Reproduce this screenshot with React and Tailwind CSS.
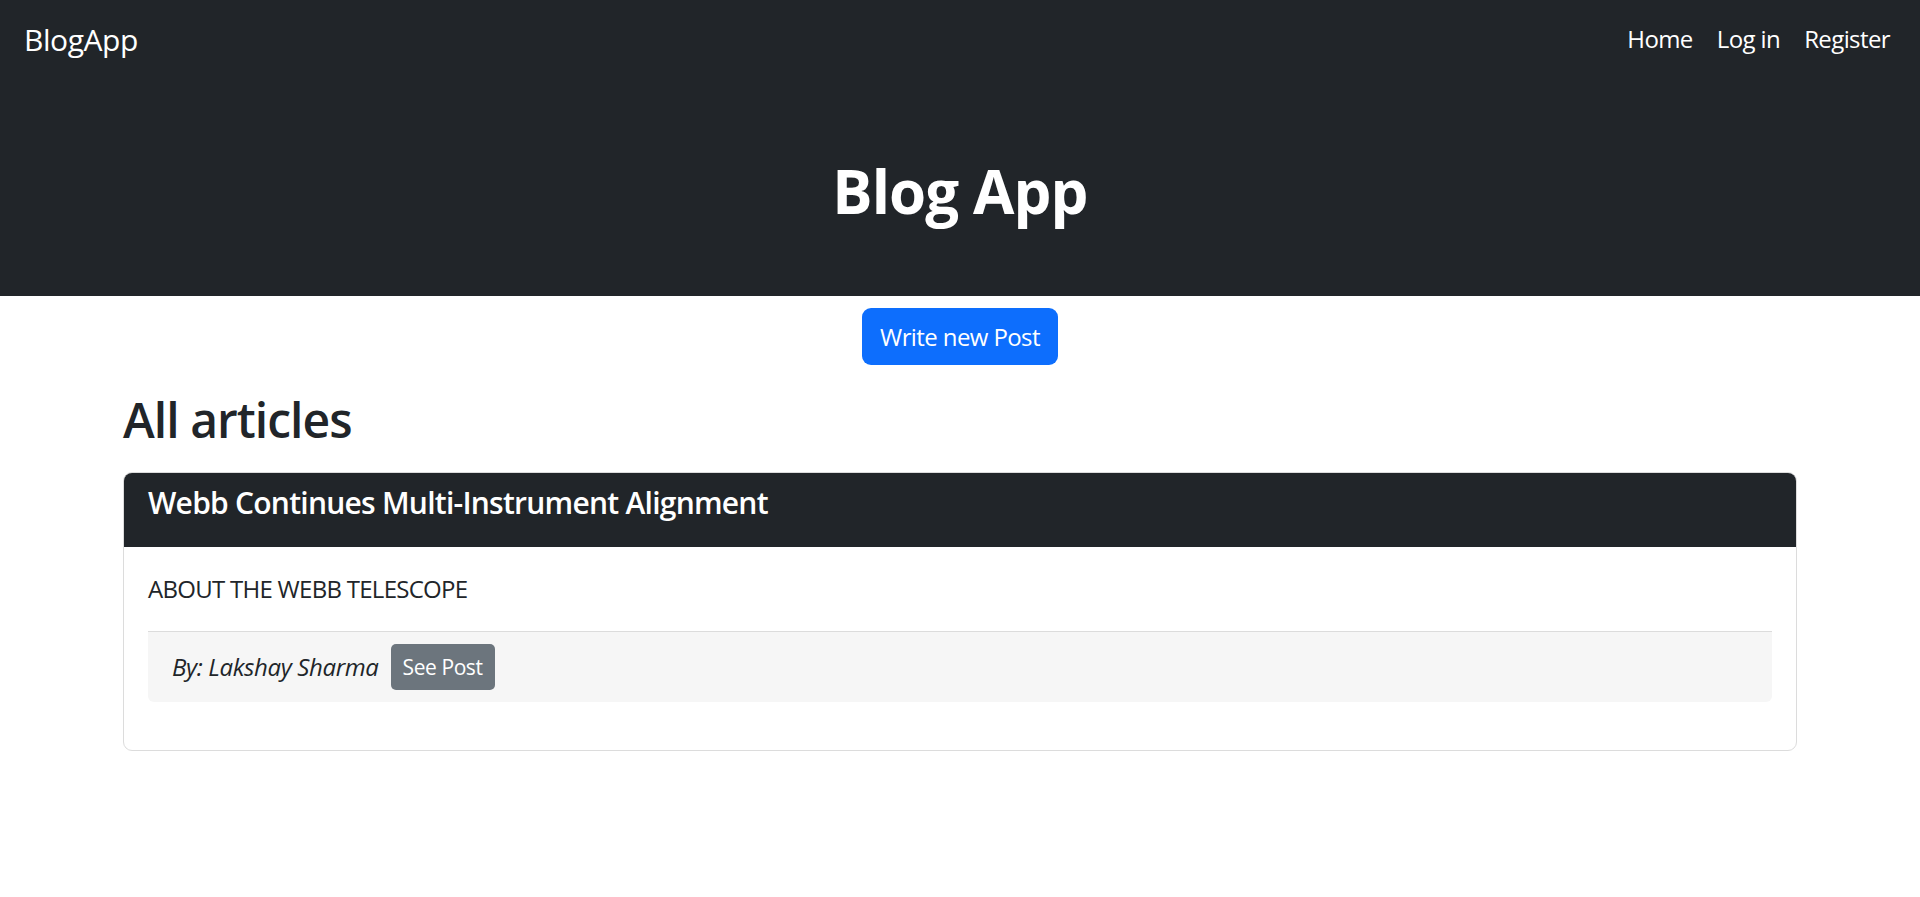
import React from 'react';

const navLinks = ['Home', 'Log in', 'Register'];

const posts = [
  {
    id: 1,
    title: 'Webb Continues Multi-Instrument Alignment',
    description: 'ABOUT THE WEBB TELESCOPE',
    author: 'Lakshay Sharma',
  },
];

const PostCard = ({ post }) => (
  <div className="border border-[#dcdcdc] rounded-[9px] overflow-hidden bg-white">
    <div className="bg-[#212529] px-[24px] pt-[12px] pb-[14px]">
      <h5 className="text-[30px] leading-[36px] mb-[12px] font-semibold text-white tracking-[-0.025em]">{post.title}</h5>
    </div>
    <div className="p-[24px]">
      <p className="text-[24px] leading-[36px] mb-[24px] tracking-[-0.03em]">{post.description}</p>
      <div className="border-t border-[#dcdcdc] bg-[#f6f6f6] rounded-b-[6px] px-[24px] py-[12px] mb-[24px] flex items-center gap-[12px]">
        <span className="italic text-[24px] leading-[36px] tracking-[-0.015em]">By: {post.author}</span>
        <button className="h-[46px] px-[12px] rounded-[5px] bg-[#6c757d] text-white text-[21px] leading-[32px] tracking-[-0.02em]">
          See Post
        </button>
      </div>
    </div>
  </div>
);

export default function App() {
  return (
    <div className="min-h-screen bg-white text-[#212529] font-['Segoe_UI','Open_Sans',sans-serif]">
      {/* navbar + hero */}
      <div className="bg-[#212529]">
        <nav className="h-[80px] flex items-center justify-between pl-[24px] pr-[18px] pb-[2px]">
          <a href="#" className="text-[30px] leading-[45px] text-white tracking-[-0.015em]">BlogApp</a>
          <ul className="flex text-[24px] leading-[36px] text-white tracking-[-0.025em]">
            {navLinks.map((link) => (
              <li key={link}>
                <a href="#" className="px-[12px]">{link}</a>
              </li>
            ))}
          </ul>
        </nav>
        <div className="h-[216px] flex items-center justify-center pt-[6px]">
          <h1 className="text-[60px] leading-[72px] font-bold text-white tracking-[-0.015em]">Blog App</h1>
        </div>
      </div>

      <div className="flex justify-center pt-[12px]">
        <button className="h-[57px] px-[18px] rounded-[9px] bg-[#0d6efd] text-white text-[24px] leading-[36px] tracking-[-0.025em]">
          Write new Post
        </button>
      </div>

      <div className="w-[1674px] mx-auto">
        <h2 className="text-[48px] leading-[58px] font-semibold tracking-[-0.02em] mt-[26px] mb-[23px]">All articles</h2>
        {posts.map((post) => (
          <PostCard key={post.id} post={post} />
        ))}
      </div>
    </div>
  );
}
